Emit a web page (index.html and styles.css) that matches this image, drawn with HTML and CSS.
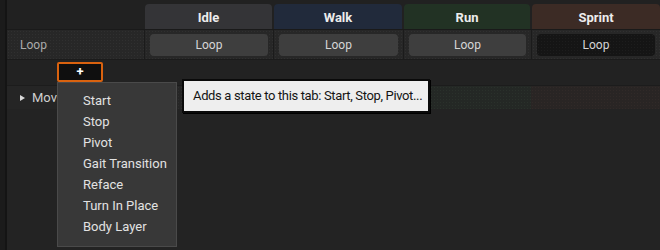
FILE: index.html
```html
<!DOCTYPE html>
<html>
<head>
<meta charset="utf-8">
<link rel="stylesheet" href="styles.css">
</head>
<body>
<div class="app">
  <div class="gutter"></div>
  <div class="main">
    <div class="grid">
      <div class="hcell"></div>
      <div class="hcell"><div class="tab idle">Idle</div></div>
      <div class="hcell"><div class="tab walk">Walk</div></div>
      <div class="hcell"><div class="tab run">Run</div></div>
      <div class="hcell"><div class="tab sprint">Sprint</div></div>

      <div class="rcell label">Loop</div>
      <div class="rcell"><div class="btn">Loop</div></div>
      <div class="rcell"><div class="btn">Loop</div></div>
      <div class="rcell"><div class="btn">Loop</div></div>
      <div class="rcell"><div class="btn dark">Loop</div></div>

      <div class="prow">
        <div class="plus">+</div>
      </div>

      <div class="mcell"><span class="tri"></span><span class="mtext">Mov</span></div>
      <div class="mcell pat-idle"></div>
      <div class="mcell pat-walk"></div>
      <div class="mcell pat-run"></div>
      <div class="mcell pat-sprint"></div>
    </div>
  </div>
</div>

<div class="menu">
  <div class="item">Start</div>
  <div class="item">Stop</div>
  <div class="item">Pivot</div>
  <div class="item">Gait Transition</div>
  <div class="item">Reface</div>
  <div class="item">Turn In Place</div>
  <div class="item">Body Layer</div>
</div>

<div class="tooltip">Adds a state to this tab: Start, Stop, Pivot...</div>
</body>
</html>
```
FILE: styles.css
```css
html, body {
  margin: 0;
  padding: 0;
}
body {
  width: 660px;
  height: 250px;
  background: #232323;
  font-family: Roboto, "Noto Sans", sans-serif;
  overflow: hidden;
  position: relative;
}
.app {
  display: flex;
  height: 250px;
}
.gutter {
  width: 5px;
  background: #1b1b1b;
  border-right: 2px solid #141414;
}
.main {
  flex: 1;
}
.grid {
  display: grid;
  grid-template-columns: 137px 129px 130px 128px 129px;
  grid-template-rows: 30px 30px 26px 23px;
}
.hcell {
  background: #212121;
  border-bottom: 1px solid #1a1a1a;
  display: flex;
  align-items: flex-end;
}
.tab {
  margin-left: 1px;
  margin-right: 1px;
  height: 25px;
  flex: 1;
  border-radius: 4px 4px 0 0;
  color: #ececec;
  font-weight: bold;
  font-size: 13px;
  display: flex;
  align-items: center;
  justify-content: center;
  padding-top: 1px;
  box-sizing: border-box;
}
.idle { background: #343437; }
.walk { background: #212a3b; }
.run { background: #223224; }
.sprint { background: #3c2b25; margin-right: 0; }

.rcell {
  background-color: #272727;
  background-image: radial-gradient(circle, #303030 0.6px, transparent 0.9px);
  background-size: 3px 3px;
  border-bottom: 1px solid #1b1b1b;
  border-left: 1px solid #1b1b1b;
  display: flex;
  align-items: center;
  padding: 0 5px;
}
.rcell.label {
  border-left: none;
  padding-left: 13px;
  color: #ababab;
  font-size: 12px;
}
.btn {
  flex: 1;
  height: 22px;
  border-radius: 4px;
  background: #3e3e3e;
  color: #d6d6d6;
  font-size: 12px;
  display: flex;
  align-items: center;
  justify-content: center;
}
.btn.dark {
  background-color: #151515;
  background-image: radial-gradient(circle, #1d1d1d 0.6px, transparent 0.9px);
  background-size: 3px 3px;
}
.prow {
  grid-column: 1 / -1;
  background: #222222;
  border-bottom: 1px solid #1c1c1c;
  padding: 2px 0 0 50px;
}
.plus {
  width: 42px;
  height: 16px;
  border: 2px solid #d9620f;
  border-radius: 2px;
  background: #0f0f0f;
  color: #ffffff;
  font-weight: bold;
  font-size: 13px;
  line-height: 15px;
  text-align: center;
}
.mcell {
  background: #252525;
  display: flex;
  align-items: center;
  white-space: nowrap;
}
.tri {
  margin-left: 13px;
  width: 0;
  height: 0;
  border-top: 3px solid transparent;
  border-bottom: 3px solid transparent;
  border-left: 5px solid #d8d8d8;
}
.mtext {
  margin-left: 7px;
  color: #cfcfcf;
  font-size: 13px;
}
.pat-idle, .pat-walk, .pat-run, .pat-sprint {
  background-size: 3px 3px;
}
.pat-idle { background-color: #262626; background-image: radial-gradient(circle, #2e2e2e 0.6px, transparent 0.9px); }
.pat-walk { background-color: #24262b; background-image: radial-gradient(circle, #2b2e35 0.6px, transparent 0.9px); }
.pat-run { background-color: #242825; background-image: radial-gradient(circle, #2a312b 0.6px, transparent 0.9px); }
.pat-sprint { background-color: #292524; background-image: radial-gradient(circle, #312a28 0.6px, transparent 0.9px); }

.menu {
  position: absolute;
  left: 57px;
  top: 82px;
  width: 118px;
  height: 156px;
  background: #383838;
  border: 1px solid #4a4a4a;
  padding-top: 7px;
}
.item {
  height: 21px;
  line-height: 21px;
  padding-left: 25px;
  font-size: 13px;
  color: #e2e2e2;
}
.tooltip {
  position: absolute;
  left: 182px;
  top: 79px;
  width: 248px;
  height: 34px;
  background: #eeeeee;
  border: 2px solid #0a0a0a;
  box-shadow: 1px 1px 0 #000;
  color: #141414;
  font-size: 13px;
  letter-spacing: -0.35px;
  white-space: nowrap;
  line-height: 30px;
  padding-left: 9px;
  box-sizing: border-box;
}
```
